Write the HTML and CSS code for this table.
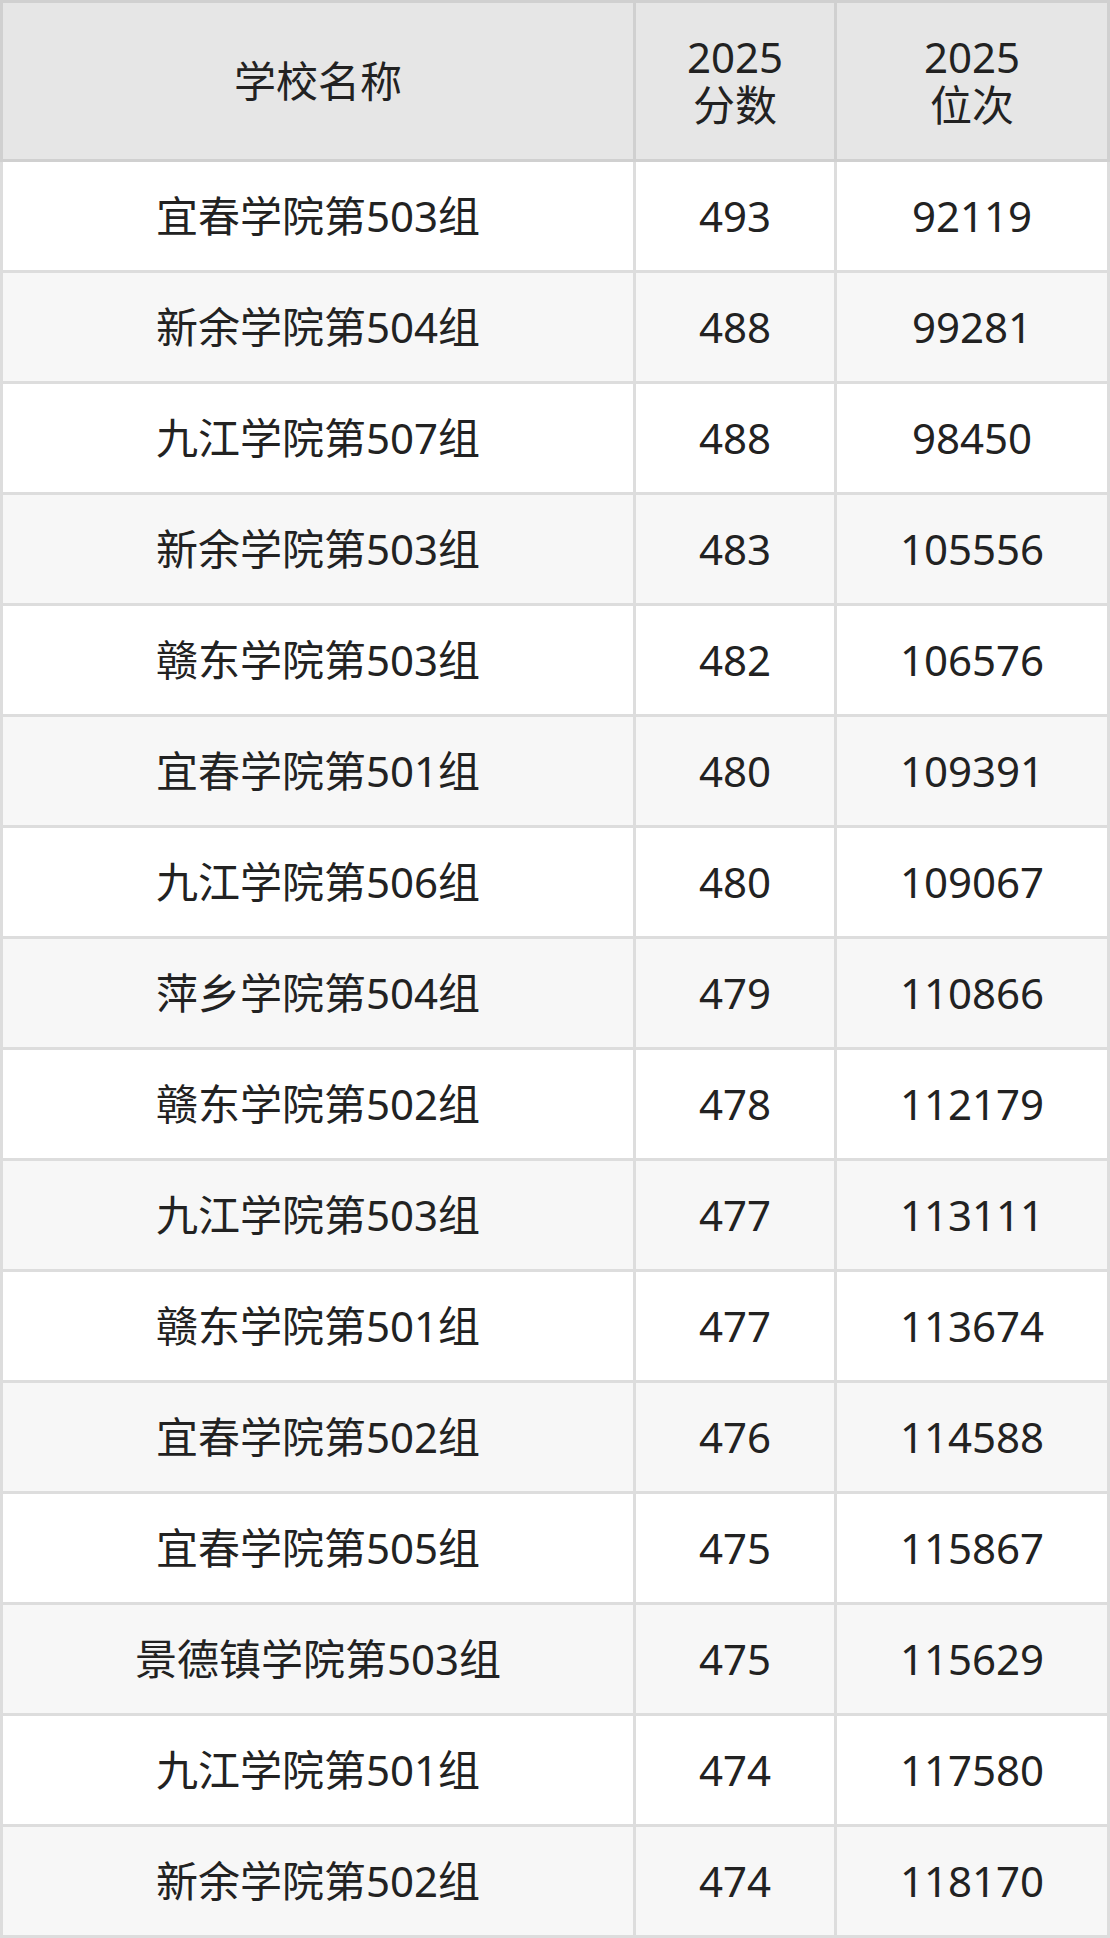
FILE: index.html
```html
<!DOCTYPE html>
<html lang="zh-CN">
<head>
<meta charset="utf-8">
<title>2025 分数位次</title>
<link rel="stylesheet" href="styles.css">
</head>
<body>
<div class="table">
  <div class="row head">
    <div class="cell first">学校名称</div>
    <div class="cell">2025<br>分数</div>
    <div class="cell">2025<br>位次</div>
  </div>
  <div class="row"><div class="cell first">宜春学院第503组</div><div class="cell">493</div><div class="cell">92119</div></div>
  <div class="row alt"><div class="cell first">新余学院第504组</div><div class="cell">488</div><div class="cell">99281</div></div>
  <div class="row"><div class="cell first">九江学院第507组</div><div class="cell">488</div><div class="cell">98450</div></div>
  <div class="row alt"><div class="cell first">新余学院第503组</div><div class="cell">483</div><div class="cell">105556</div></div>
  <div class="row"><div class="cell first">赣东学院第503组</div><div class="cell">482</div><div class="cell">106576</div></div>
  <div class="row alt"><div class="cell first">宜春学院第501组</div><div class="cell">480</div><div class="cell">109391</div></div>
  <div class="row"><div class="cell first">九江学院第506组</div><div class="cell">480</div><div class="cell">109067</div></div>
  <div class="row alt"><div class="cell first">萍乡学院第504组</div><div class="cell">479</div><div class="cell">110866</div></div>
  <div class="row"><div class="cell first">赣东学院第502组</div><div class="cell">478</div><div class="cell">112179</div></div>
  <div class="row alt"><div class="cell first">九江学院第503组</div><div class="cell">477</div><div class="cell">113111</div></div>
  <div class="row"><div class="cell first">赣东学院第501组</div><div class="cell">477</div><div class="cell">113674</div></div>
  <div class="row alt"><div class="cell first">宜春学院第502组</div><div class="cell">476</div><div class="cell">114588</div></div>
  <div class="row"><div class="cell first">宜春学院第505组</div><div class="cell">475</div><div class="cell">115867</div></div>
  <div class="row alt"><div class="cell first">景德镇学院第503组</div><div class="cell">475</div><div class="cell">115629</div></div>
  <div class="row"><div class="cell first">九江学院第501组</div><div class="cell">474</div><div class="cell">117580</div></div>
  <div class="row alt"><div class="cell first">新余学院第502组</div><div class="cell">474</div><div class="cell">118170</div></div>
</div>
</body>
</html>
```

FILE: styles.css
```css
html, body {
  margin: 0;
  padding: 0;
  background: #ffffff;
}

.table {
  width: 1110px;
  font-family: "Noto Sans", "Noto Sans CJK SC", sans-serif;
  font-size: 42px;
  color: #222222;
}

.row {
  display: grid;
  grid-template-columns: 636px 201px 273px;
  height: 111px;
  background: #ffffff;
}

.row.alt {
  background: #f7f7f7;
}

.cell {
  box-sizing: border-box;
  display: flex;
  align-items: center;
  justify-content: center;
  text-align: center;
  border-right: 3px solid #dddddd;
  border-bottom: 3px solid #dddddd;
  line-height: 1.15;
}

.cell.first {
  border-left: 3px solid #dddddd;
}

.row.head {
  height: 162px;
  background: #e6e6e6;
}

.row.head .cell {
  border-color: #d0d0d0;
  border-top: 3px solid #d0d0d0;
}
```
